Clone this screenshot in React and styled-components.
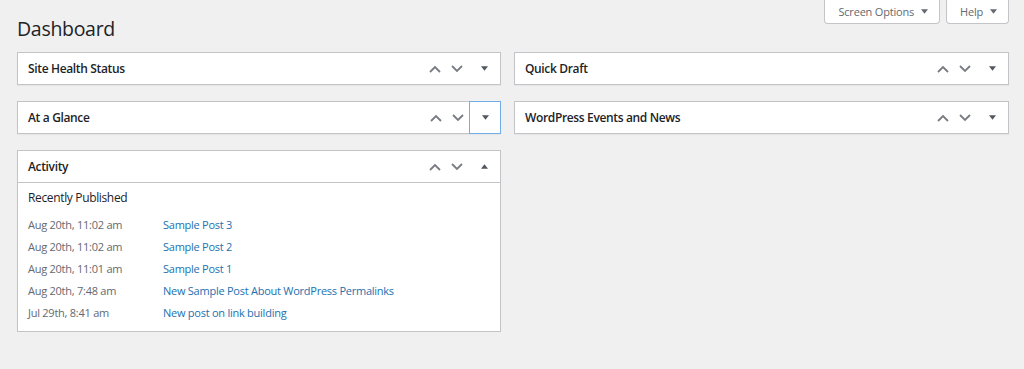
import React from "react";
import styled, { createGlobalStyle } from "styled-components";

const Global = createGlobalStyle`
  html, body { margin: 0; padding: 0; background: #f0f0f1; }
  body {
    font-family: "Open Sans", "Noto Sans", sans-serif;
    color: #1d2327;
    -webkit-font-smoothing: antialiased;
  }
`;

const Page = styled.div`
  padding: 0 15px 0 17px;
`;

const TopBar = styled.div`
  display: flex;
  justify-content: space-between;
  align-items: flex-start;
  height: 52px;
`;

const Title = styled.h1`
  margin: 15px 0 0 0;
  font-size: 19.5px;
  font-weight: 400;
  letter-spacing: -0.3px;
  line-height: 28px;
  color: #1d2327;
`;

const MetaLinks = styled.div`
  display: flex;
  gap: 6px;
`;

const MetaButton = styled.button`
  display: flex;
  align-items: center;
  gap: 7px;
  height: 24px;
  padding: 0 11px 0 13px;
  background: #fff;
  border: 1px solid #c3c4c7;
  border-top: none;
  border-radius: 0 0 4px 4px;
  font-family: inherit;
  font-size: 11px;
  letter-spacing: -0.2px;
  color: #646970;
  cursor: pointer;
`;

const Columns = styled.div`
  display: grid;
  grid-template-columns: 484px 495px;
  column-gap: 13px;
  align-items: start;
`;

const Column = styled.div`
  display: flex;
  flex-direction: column;
  gap: 16px;
`;

const Box = styled.section`
  background: #fff;
  border: 1px solid #c3c4c7;
  box-shadow: 0 1px 1px rgba(0, 0, 0, 0.04);
`;

const BoxHeader = styled.div`
  display: flex;
  align-items: center;
  height: 31px;
  border-bottom: ${(p) => (p.$open ? "1px solid #c3c4c7" : "none")};
`;

const BoxTitle = styled.h2`
  flex: 1;
  margin: 0;
  padding: 1px 10px 0;
  font-size: 12px;
  font-weight: 600;
  letter-spacing: -0.35px;
  line-height: 18px;
  color: #1d2327;
`;

const Handle = styled.button`
  display: flex;
  align-items: center;
  justify-content: center;
  width: ${(p) => p.$w}px;
  height: ${(p) => (p.$focus ? 33 : 31)}px;
  margin: ${(p) => (p.$focus ? "-1px -1px -1px 0" : 0)};
  padding: 0;
  background: transparent;
  border: ${(p) => (p.$focus ? "1px solid #72aee6" : "none")};
  box-sizing: border-box;
  color: ${(p) => p.$color};
  cursor: pointer;
`;

const BoxBody = styled.div`
  padding: 6px 10px 8px;
`;

const SubHead = styled.h3`
  margin: 0 0 6px;
  font-size: 12px;
  font-weight: 400;
  letter-spacing: -0.35px;
  line-height: 18px;
  color: #1d2327;
`;

const List = styled.ul`
  list-style: none;
  margin: 0;
  padding: 0;
`;

const Row = styled.li`
  display: flex;
  height: 22px;
  align-items: center;
  font-size: 11px;
  letter-spacing: -0.25px;
`;

const Date = styled.span`
  width: 135px;
  flex: none;
  color: #646970;
`;

const PostLink = styled.a`
  color: #2271b1;
  text-decoration: none;
`;

const Up = () => (
  <svg width="12" height="8" viewBox="0 0 12 8">
    <polyline points="1,7 6,2 11,7" fill="none" stroke="currentColor" strokeWidth="1.8" />
  </svg>
);
const Down = () => (
  <svg width="12" height="8" viewBox="0 0 12 8">
    <polyline points="1,1 6,6 11,1" fill="none" stroke="currentColor" strokeWidth="1.8" />
  </svg>
);
const Tri = ({ up }) => (
  <svg width="7" height="5" viewBox="0 0 8 5">
    <polygon points={up ? "0,5 8,5 4,0" : "0,0 8,0 4,5"} fill="currentColor" />
  </svg>
);
const Caret = () => (
  <svg width="7" height="5" viewBox="0 0 8 5">
    <polygon points="0,0 8,0 4,5" fill="#646970" />
  </svg>
);

const Widget = ({ title, open, focus, children }) => (
  <Box>
    <BoxHeader $open={open}>
      <BoxTitle>{title}</BoxTitle>
      <Handle $w={23} $color="#787c82" aria-label="Move up">
        <Up />
      </Handle>
      <Handle $w={22} $color="#787c82" aria-label="Move down">
        <Down />
      </Handle>
      <Handle $w={32} $color="#50575e" $focus={focus} aria-label="Toggle panel">
        <Tri up={open} />
      </Handle>
    </BoxHeader>
    {open && <BoxBody>{children}</BoxBody>}
  </Box>
);

const posts = [
  ["Aug 20th, 11:02 am", "Sample Post 3"],
  ["Aug 20th, 11:02 am", "Sample Post 2"],
  ["Aug 20th, 11:01 am", "Sample Post 1"],
  ["Aug 20th, 7:48 am", "New Sample Post About WordPress Permalinks"],
  ["Jul 29th, 8:41 am", "New post on link building"],
];

export default function App() {
  return (
    <Page>
      <Global />
      <TopBar>
        <Title>Dashboard</Title>
        <MetaLinks>
          <MetaButton>
            Screen Options <Caret />
          </MetaButton>
          <MetaButton>
            Help <Caret />
          </MetaButton>
        </MetaLinks>
      </TopBar>
      <Columns>
        <Column>
          <Widget title="Site Health Status" />
          <Widget title="At a Glance" focus />
          <Widget title="Activity" open>
            <SubHead>Recently Published</SubHead>
            <List>
              {posts.map(([d, t]) => (
                <Row key={t}>
                  <Date>{d}</Date>
                  <PostLink href="#">{t}</PostLink>
                </Row>
              ))}
            </List>
          </Widget>
        </Column>
        <Column>
          <Widget title="Quick Draft" />
          <Widget title="WordPress Events and News" />
        </Column>
      </Columns>
    </Page>
  );
}
